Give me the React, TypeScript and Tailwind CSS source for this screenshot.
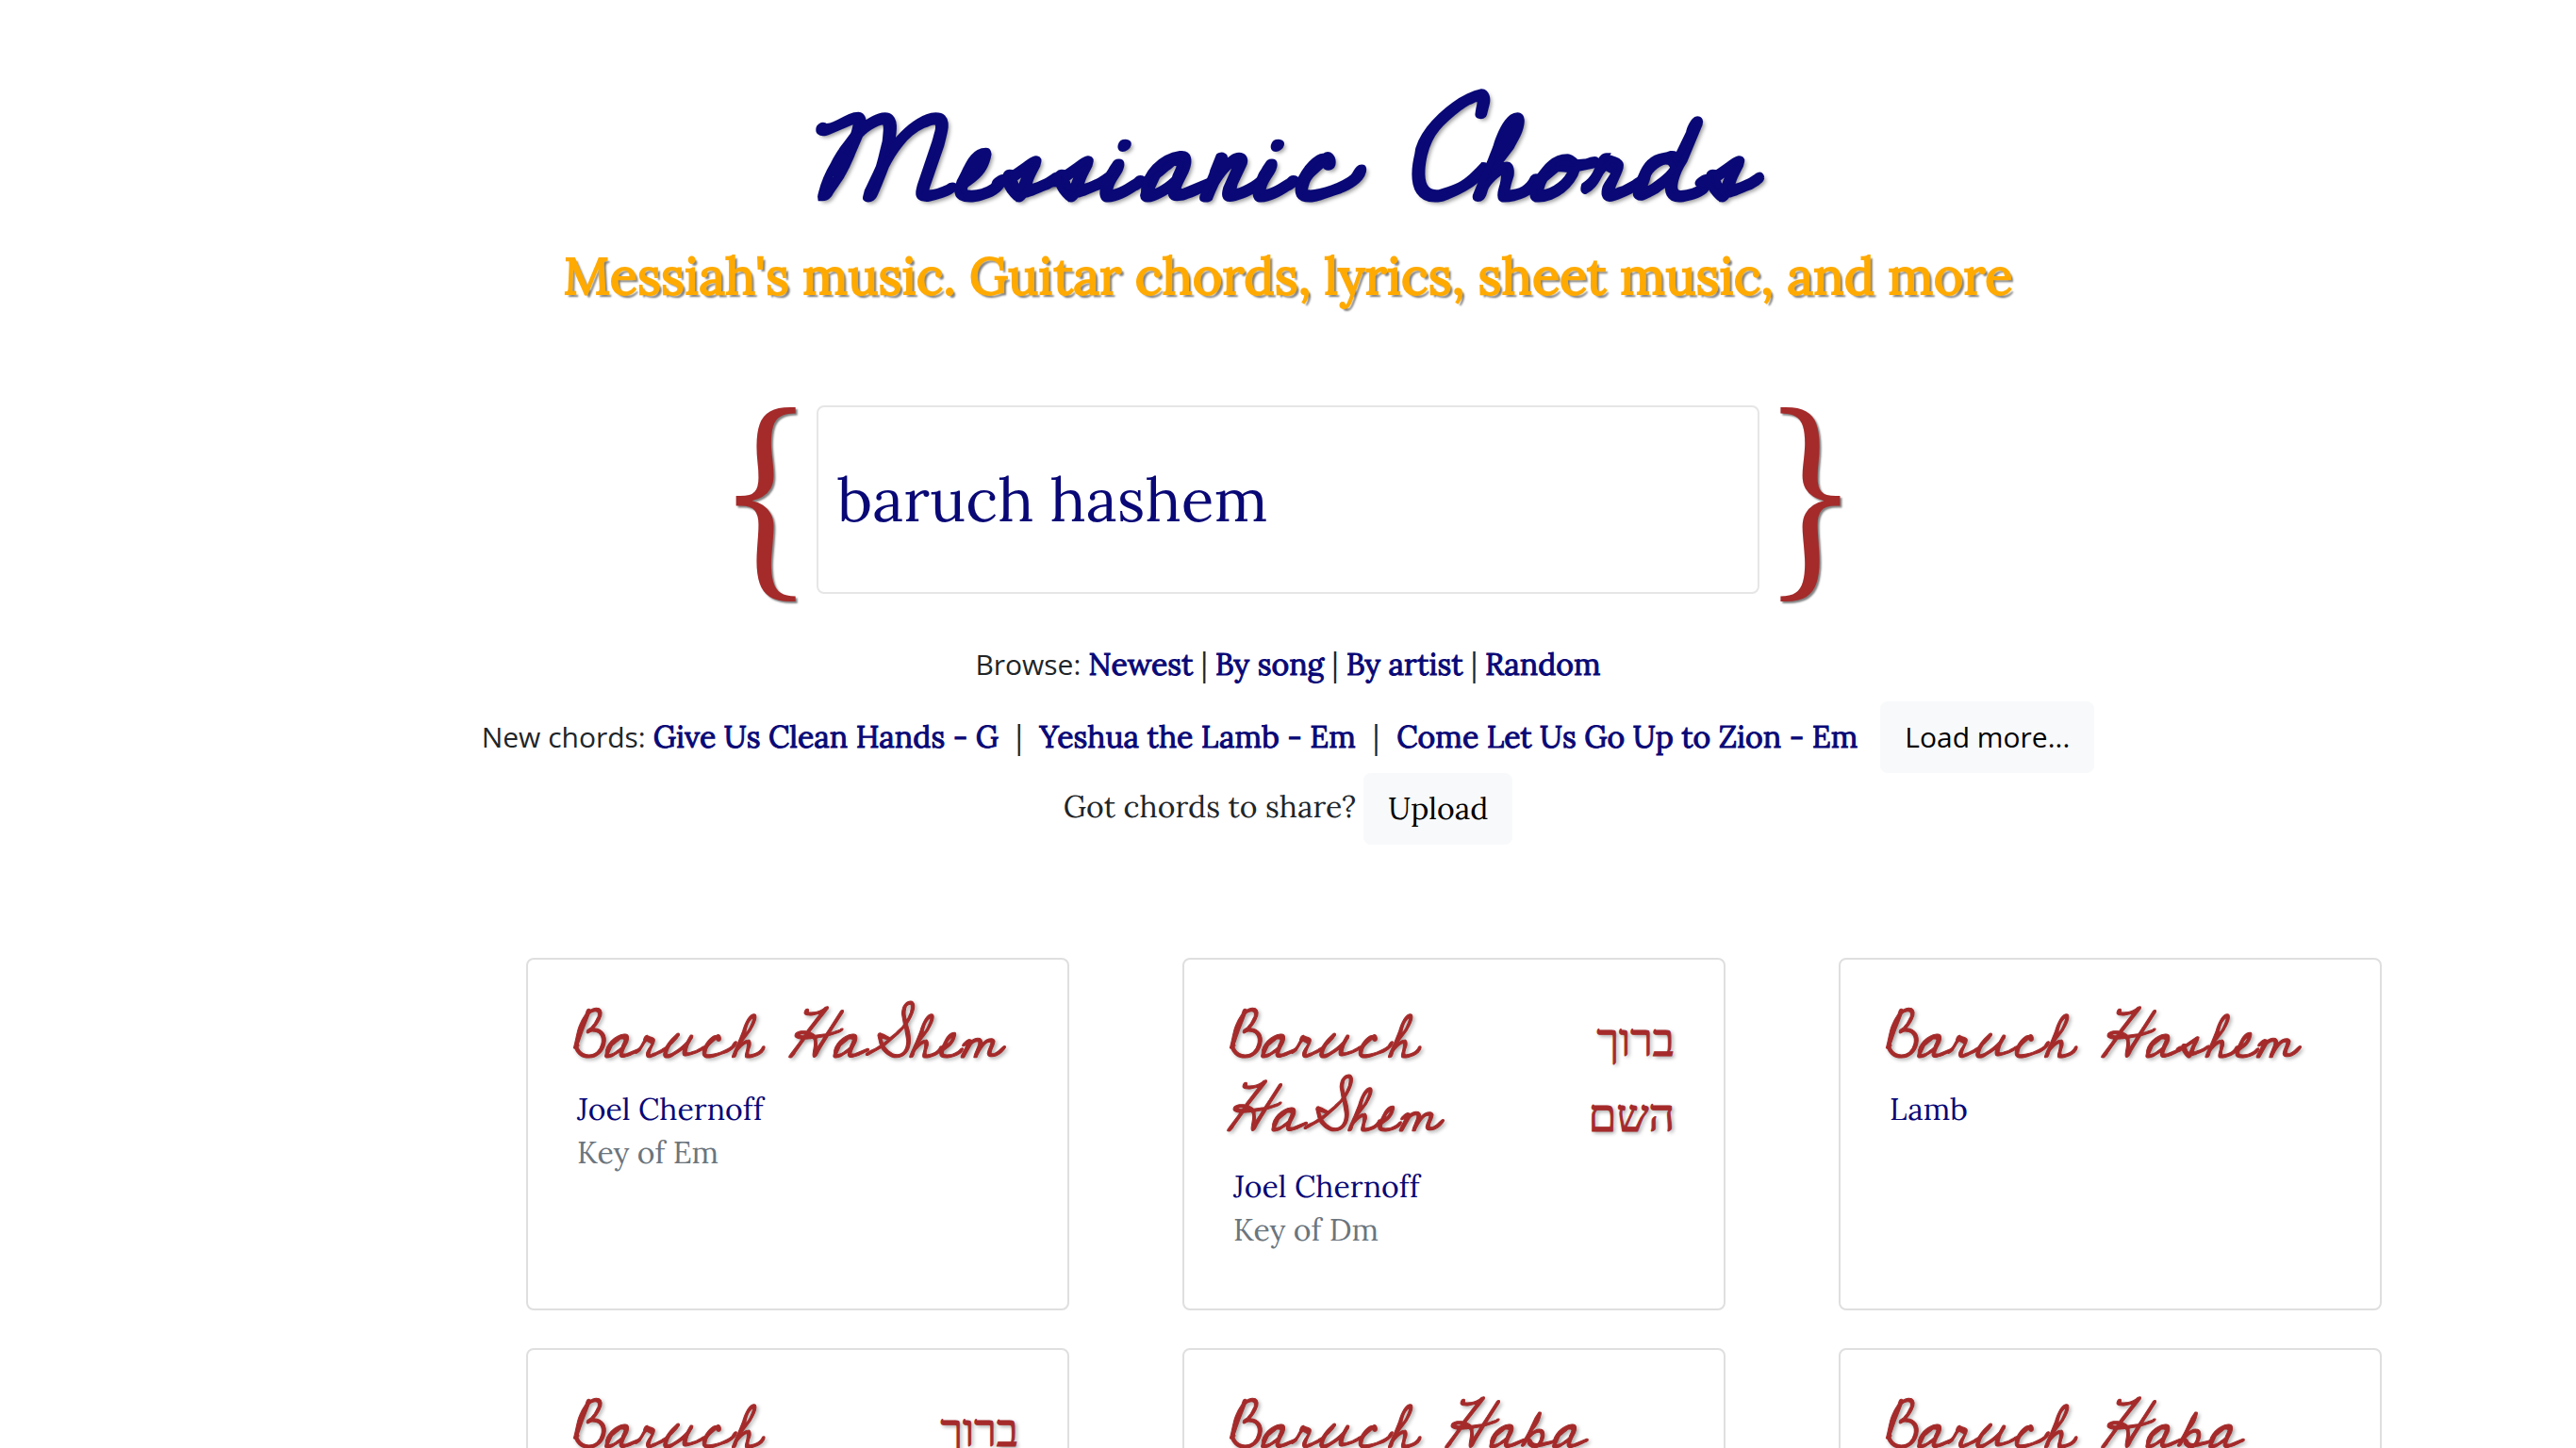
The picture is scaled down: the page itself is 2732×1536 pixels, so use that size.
import React, { useState } from "react";

type Song = { title: string; hebrew?: string; artist?: string; songKey?: string };

const songs: Song[] = [
  { title: "Baruch HaShem", artist: "Joel Chernoff", songKey: "Key of Em" },
  { title: "Baruch HaShem", hebrew: "ברוך השם", artist: "Joel Chernoff", songKey: "Key of Dm" },
  { title: "Baruch Hashem", artist: "Lamb" },
  { title: "Baruch", hebrew: "ברוך" },
  { title: "Baruch Haba" },
  { title: "Baruch Haba" },
];

const browseLinks = ["Newest", "By song", "By artist", "Random"];
const newChords = ["Give Us Clean Hands - G", "Yeshua the Lamb - Em", "Come Let Us Go Up to Zion - Em"];

function NavLink({ children }: { children: React.ReactNode }) {
  return (
    <a href="#" className="text-[#090876] [-webkit-text-stroke:1px_#090876]">
      {children}
    </a>
  );
}

function Brace({ children }: { children: string }) {
  return (
    <span
      aria-hidden="true"
      className="text-[200px] leading-[162px] text-[#a52a2a] [text-shadow:2px_2px_2px_gray]"
    >
      {children}
    </span>
  );
}

function SongCard({ song }: { song: Song }) {
  return (
    <article className="min-h-[374px] rounded-lg border-2 border-[#dfdfdf] px-11 pt-[46px] pb-10">
      <div className="flex items-start text-[#a52a2a] [text-shadow:2px_2px_4px_rgba(0,0,0,0.4)]">
        <h2 className="flex-1 font-['Cedarville_Cursive','Liberation_Serif',serif] text-[64px] leading-[78px] italic [-webkit-text-stroke:1px_#a52a2a]">
          <a href="#">{song.title}</a>
        </h2>
        {song.hebrew && (
          <span
            lang="he"
            dir="rtl"
            className="mr-2 w-[120px] font-['Liberation_Serif',serif] text-[48px] leading-[80px] [-webkit-text-stroke:1px_#a52a2a]"
          >
            {song.hebrew}
          </span>
        )}
      </div>
      <div className="mt-3 flex flex-col items-start pl-2 leading-[46px]">
        {song.artist && (
          <a href="#" className="text-[#090876]">
            {song.artist}
          </a>
        )}
        {song.songKey && <span className="text-[#6c757d]">{song.songKey}</span>}
      </div>
    </article>
  );
}

export default function App() {
  const [query, setQuery] = useState("baruch hashem");
  return (
    <div className="h-screen overflow-hidden bg-white font-['Lora','Liberation_Serif',serif] text-[32px] leading-[48px] text-[#212529]">
      <header className="pt-[100px] text-center">
        <h1 className="pr-7 font-['Cedarville_Cursive','Liberation_Serif',serif] text-[122px] leading-[150px] font-bold text-[#090876] italic [-webkit-text-stroke:3px_#090876] [text-shadow:3px_3px_4px_rgba(0,0,0,0.4)]">
          Messianic Chords
        </h1>
        <p className="mt-1.5 text-[54px] leading-[74px] text-[#ffaa00] [-webkit-text-stroke:2px_#ffaa00] [text-shadow:3px_3px_2px_gray]">
          Messiah's music. Guitar chords, lyrics, sheet music, and more
        </p>
      </header>

      <div className="mt-[100px] flex items-start justify-center gap-5">
        <Brace>{"{"}</Brace>
        <input
          type="text"
          aria-label="Search chords"
          value={query}
          onChange={(e) => setQuery(e.target.value)}
          className="h-[200px] w-[1000px] rounded-lg border-2 border-[#e6e6e6] px-5 text-[64px] text-[#090876] outline-none"
        />
        <Brace>{"}"}</Brace>
      </div>

      <nav aria-label="Browse" className="mt-[51px] flex justify-center gap-2">
        <span className="font-['Open_Sans',sans-serif] text-[30px]">Browse:</span>
        {browseLinks.map((label, i) => (
          <React.Fragment key={label}>
            {i > 0 && <span>|</span>}
            <NavLink>{label}</NavLink>
          </React.Fragment>
        ))}
      </nav>

      <div className="mt-[15px] flex items-center justify-center">
        <span className="mr-2 font-['Open_Sans',sans-serif] text-[30px]">New chords:</span>
        {newChords.map((label, i) => (
          <React.Fragment key={label}>
            {i > 0 && <span className="mx-[18px]">|</span>}
            <NavLink>{label}</NavLink>
          </React.Fragment>
        ))}
        <button
          type="button"
          className="ml-6 h-[76px] rounded-lg bg-[#f8f9fa] px-[26px] font-['Open_Sans',sans-serif] text-[30px] text-black"
        >
          Load more...
        </button>
      </div>

      <div className="flex justify-center gap-2">
        <span className="pt-3">Got chords to share?</span>
        <button type="button" className="h-[76px] rounded-lg bg-[#f8f9fa] px-[26px] text-black">
          Upload
        </button>
      </div>

      <main className="mt-[120px] grid grid-cols-3 gap-x-[120px] gap-y-10 pr-[206px] pl-[558px]">
        {songs.map((song, i) => (
          <SongCard key={i} song={song} />
        ))}
      </main>
    </div>
  );
}
